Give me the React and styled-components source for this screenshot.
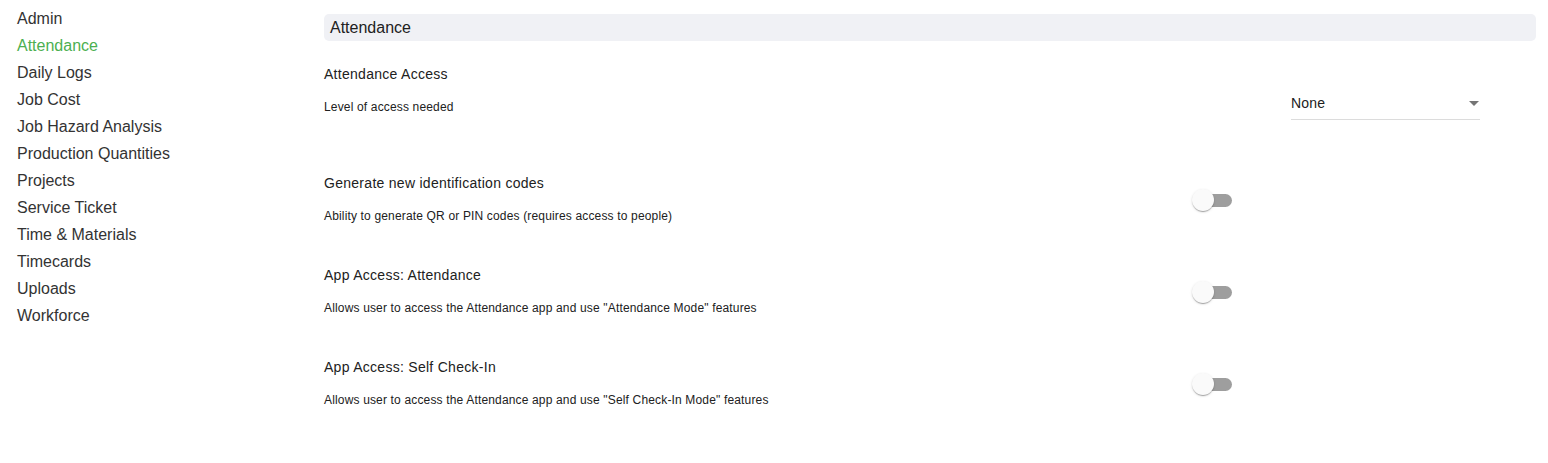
import React, { useState } from 'react'
import styled, { createGlobalStyle } from 'styled-components'

const GlobalStyle = createGlobalStyle`
    body {
        margin: 0;
        background: #fff;
        font-family: "Liberation Sans", Arial, sans-serif;
    }
`

const Page = styled.div`
    display: flex;
    flex-direction: row;
    align-items: flex-start;
    width: 100%;
    min-height: 463px;
`

const Sidebar = styled.nav`
    width: 307px;
    flex-shrink: 0;
    padding: 5px 0 0 17px;
    display: flex;
    flex-direction: column;
`

const NavItem = styled.div`
    font-size: 16px;
    line-height: 27px;
    color: ${props => props.$active ? '#4caf50' : '#333'};
    cursor: pointer;
`

const Content = styled.main`
    flex: 1;
    padding: 14px 12px 0 0;
    display: flex;
    flex-direction: column;
`

const HeaderBar = styled.div`
    height: 27px;
    display: flex;
    align-items: center;
    padding-left: 6px;
    background: #f0f1f5;
    border-radius: 5px;
    font-size: 16px;
    color: #212121;
    margin-bottom: 23px;
`

const Row = styled.div`
    display: flex;
    flex-direction: row;
    align-items: ${props => props.$top ? 'flex-start' : 'center'};
    padding-bottom: ${props => props.$top ? '34px' : '41px'};
`

const Labels = styled.div`
    width: 868px;
    flex-shrink: 0;
    display: flex;
    flex-direction: column;
`

const Title = styled.div`
    font-size: 14px;
    line-height: 20px;
    letter-spacing: 0.28px;
    color: #212121;
    margin-bottom: 15px;
`

const Description = styled.div`
    font-size: 12px;
    line-height: 16px;
    letter-spacing: 0.16px;
    color: #212121;
`

const SelectWrap = styled.div`
    margin: 28px 0 0 99px;
    width: 189px;
    height: 47px;
`

const SelectBox = styled.div`
    display: flex;
    align-items: center;
    justify-content: space-between;
    height: 22px;
    padding-bottom: 5px;
    border-bottom: 1px solid #dcdcdc;
    font-size: 14px;
    letter-spacing: 0.2px;
    color: #212121;
    cursor: pointer;
`

const Arrow = styled.span`
    width: 0;
    height: 0;
    margin-right: 1px;
    border-left: 5px solid transparent;
    border-right: 5px solid transparent;
    border-top: 5px solid #757575;
`

const SwitchRoot = styled.div`
    position: relative;
    width: 40px;
    height: 24px;
    margin-top: 3px;
    cursor: pointer;
`

const Track = styled.div`
    position: absolute;
    left: 5px;
    top: 6px;
    width: 35px;
    height: 13px;
    border-radius: 7px;
    background: ${props => props.$on ? '#a5d6a7' : '#9e9e9e'};
`

const Thumb = styled.div`
    position: absolute;
    top: 1px;
    left: ${props => props.$on ? '20px' : '0'};
    width: 22px;
    height: 22px;
    border-radius: 50%;
    background: ${props => props.$on ? '#4caf50' : '#fafafa'};
    box-shadow: 0 2px 1px -1px rgba(0,0,0,0.2), 0 1px 1px 0 rgba(0,0,0,0.14), 0 1px 3px 0 rgba(0,0,0,0.12);
`

const Switch = ({ on, onToggle }) => (
    <SwitchRoot onClick={onToggle}>
        <Track $on={on} />
        <Thumb $on={on} />
    </SwitchRoot>
)

const navItems = [
    'Admin', 'Attendance', 'Daily Logs', 'Job Cost', 'Job Hazard Analysis',
    'Production Quantities', 'Projects', 'Service Ticket', 'Time & Materials',
    'Timecards', 'Uploads', 'Workforce'
]

const toggles = [
    { title: 'Generate new identification codes', desc: 'Ability to generate QR or PIN codes (requires access to people)' },
    { title: 'App Access: Attendance', desc: 'Allows user to access the Attendance app and use "Attendance Mode" features' },
    { title: 'App Access: Self Check-In', desc: 'Allows user to access the Attendance app and use "Self Check-In Mode" features' },
]

const App = () => {
    const [values, setValues] = useState([false, false, false])

    const flip = (i) => setValues(values.map((v, j) => j === i ? !v : v))

    return (
        <>
            <GlobalStyle />
            <Page>
                <Sidebar>
                    {navItems.map(item => (
                        <NavItem key={item} $active={item === 'Attendance'}>{item}</NavItem>
                    ))}
                </Sidebar>
                <Content>
                    <HeaderBar>Attendance</HeaderBar>
                    <Row $top>
                        <Labels>
                            <Title>Attendance Access</Title>
                            <Description>Level of access needed</Description>
                        </Labels>
                        <SelectWrap>
                            <SelectBox>
                                <span>None</span>
                                <Arrow />
                            </SelectBox>
                        </SelectWrap>
                    </Row>
                    {toggles.map((t, i) => (
                        <Row key={t.title}>
                            <Labels>
                                <Title>{t.title}</Title>
                                <Description>{t.desc}</Description>
                            </Labels>
                            <Switch on={values[i]} onToggle={() => flip(i)} />
                        </Row>
                    ))}
                </Content>
            </Page>
        </>
    )
}

export default App
